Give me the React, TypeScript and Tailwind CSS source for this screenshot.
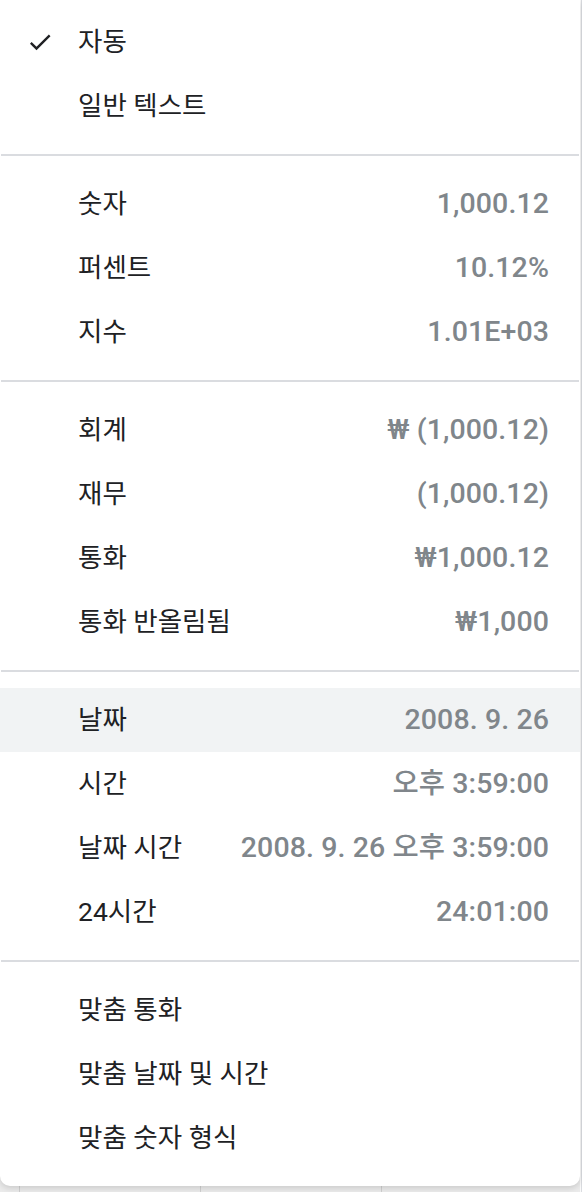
import React from 'react';

type Item = { label: string; value?: string; checked?: boolean; active?: boolean };

const SECTIONS: Item[][] = [
    [
        { label: "자동", checked: true },
        { label: "일반 텍스트" },
    ],
    [
        { label: "숫자", value: "1,000.12" },
        { label: "퍼센트", value: "10.12%" },
        { label: "지수", value: "1.01E+03" },
    ],
    [
        { label: "회계", value: "₩ (1,000.12)" },
        { label: "재무", value: "(1,000.12)" },
        { label: "통화", value: "₩1,000.12" },
        { label: "통화 반올림됨", value: "₩1,000" },
    ],
    [
        { label: "날짜", value: "2008. 9. 26", active: true },
        { label: "시간", value: "오후 3:59:00" },
        { label: "날짜 시간", value: "2008. 9. 26 오후 3:59:00" },
        { label: "24시간", value: "24:01:00" },
    ],
    [
        { label: "맞춤 통화" },
        { label: "맞춤 날짜 및 시간" },
        { label: "맞춤 숫자 형식" },
    ],
];

function Check() {
    return (
        <svg viewBox="0 0 24 24" className="w-[28px] h-[28px]" fill="#202124">
            <path d="M9 16.17L4.83 12l-1.42 1.41L9 19 21 7l-1.41-1.41z" />
        </svg>
    );
}

function Row({ item }: { item: Item }) {
    return (
        <div className={`h-[64px] flex items-center pl-[26px] pr-[31px] ${item.active ? "bg-[#f1f3f4]" : ""}`}>
            <div className="w-[52px] flex items-center">{item.checked && <Check />}</div>
            <span className="text-[26.5px] text-[#202124] leading-none">{item.label}</span>
            {item.value && (
                <span className="ml-auto text-[28.5px] font-medium text-[#80868b] leading-none tracking-[0.1px]">
                    {item.value}
                </span>
            )}
        </div>
    );
}

export default function App() {
    return (
        <div className="w-[582px] h-[1192px] bg-[#ebebeb] relative overflow-hidden" style={{ fontFamily: 'Roboto, "Noto Sans CJK KR", sans-serif' }}>
            {/* sheet grid peeking behind the menu */}
            <div className="absolute inset-0 flex">
                <div className="w-[20px] border-r border-[#d0d0d0]" />
                <div className="w-[181px] border-r border-[#d0d0d0]" />
                <div className="w-[181px] border-r border-[#d0d0d0]" />
                <div className="flex-1" />
            </div>
            <div className="absolute top-0 right-0 w-[2px] h-full bg-[#fafafa] border-r border-[#dadce0]" />

            <div className="relative w-[580px] h-[1186px] bg-white rounded-b-[10px] shadow-[0_2px_6px_rgba(0,0,0,0.15)]">
                {SECTIONS.map((section, i) => (
                    <div key={i}>
                        {i > 0 && <div className="mx-[1px] h-[2px] bg-[#dadce0]" />}
                        <div className={i === 0 ? "pt-[10px] pb-[16px]" : "py-[16px]"}>
                            {section.map((item) => (
                                <Row key={item.label} item={item} />
                            ))}
                        </div>
                    </div>
                ))}
            </div>
        </div>
    );
}
